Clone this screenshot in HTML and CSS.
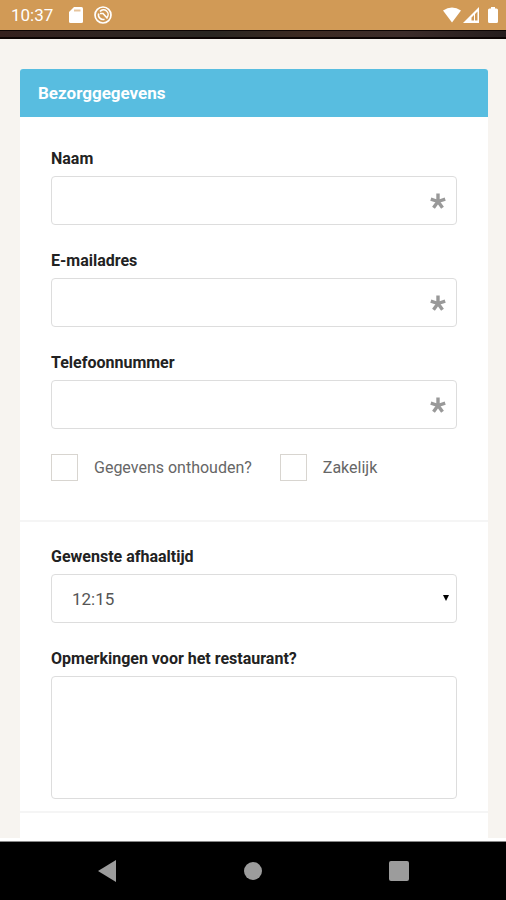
FILE: index.html
```html
<!DOCTYPE html>
<html lang="nl">
<head>
<meta charset="utf-8">
<meta name="viewport" content="width=device-width, initial-scale=1">
<title>Bezorggegevens</title>
<link rel="stylesheet" href="styles.css">
</head>
<body>
<svg width="0" height="0" class="defs" aria-hidden="true">
  <symbol id="required" viewBox="0 0 16 16">
    <path d="M8 8.500V.5M8 8.500L.8 6.200M8 8.500l7.200-2.300M8 8.500l-4.500 6.300M8 8.500l4.500 6.300" fill="none" stroke="#999" stroke-width="3.400"/>
  </symbol>
</svg>
<header class="status">
  <span class="clock">10:37</span>
  <svg class="card-icon" width="14" height="16" viewBox="0 0 14 16" aria-hidden="true"><path fill="#fff" d="M5 0h7.500Q14 0 14 1.500v13q0 1.500-1.500 1.500h-11Q0 16 0 14.500V5z"/><path d="M5 3.500h6.500" stroke="#e6c49c" stroke-width="2"/></svg>
  <svg class="sync-icon" width="18" height="18" viewBox="0 0 18 18" fill="none" stroke="#fff" aria-hidden="true"><circle cx="9" cy="9" r="8" stroke-width="1.700"/><path stroke-width="1.600" d="M6 5.500A4.600 4.600 0 0 1 13 11.500M10.500 13.300A4.600 4.600 0 0 1 4.700 7.500M6 7.500h3l4.500 5"/></svg>
  <span class="signals">
    <svg width="18" height="16" viewBox="0 0 18 16" aria-hidden="true"><path fill="#fff" d="M0 3.500Q9-2.500 18 3.500L9 15.500z"/></svg>
    <svg width="17" height="16" viewBox="0 0 17 16" aria-hidden="true"><path fill="#fff" fill-rule="evenodd" d="M0 16L16 0v16zM8.500 13.500h2.500V8L8.500 10.500zM12 13.500h2.500V4.500L12 7z"/></svg>
    <svg class="battery" width="10" height="16" viewBox="0 0 10 16" aria-hidden="true"><path fill="#fff" d="M3 0h4v1.500h1.500Q10 1.500 10 3v11.500q0 1.500-1.500 1.500h-7Q0 16 0 14.500V3q0-1.500 1.500-1.500H3z"/></svg>
  </span>
</header>
<div class="banner"></div>
<main class="page">
  <form class="card">
    <h1 class="card-title">Bezorggegevens</h1>
    <section class="group">
      <div class="field">
        <label for="name">Naam</label>
        <div class="control"><input id="name" type="text" required><svg class="star" aria-hidden="true"><use href="#required"/></svg></div>
      </div>
      <div class="field">
        <label for="mail">E-mailadres</label>
        <div class="control"><input id="mail" type="email" required><svg class="star" aria-hidden="true"><use href="#required"/></svg></div>
      </div>
      <div class="field">
        <label for="phone">Telefoonnummer</label>
        <div class="control"><input id="phone" type="tel" required><svg class="star" aria-hidden="true"><use href="#required"/></svg></div>
      </div>
      <div class="checks">
        <label class="check" for="remember"><input id="remember" type="checkbox">Gegevens onthouden?</label>
        <label class="check" for="business"><input id="business" type="checkbox">Zakelijk</label>
      </div>
    </section>
    <section class="group order">
      <div class="field">
        <label for="time">Gewenste afhaaltijd</label>
        <div class="control">
          <select id="time"><option>12:15</option></select>
          <svg class="arrow" viewBox="0 0 6 6" aria-hidden="true"><path d="M0 0h6L3 6z"/></svg>
        </div>
      </div>
      <div class="field">
        <label for="notes">Opmerkingen voor het restaurant?</label>
        <textarea id="notes"></textarea>
      </div>
    </section>
    <section class="group"></section>
  </form>
</main>
<nav class="system-nav">
  <button type="button" aria-label="Terug"><svg width="18" height="22" viewBox="0 0 18 22"><path d="M18 0v22L0 11z"/></svg></button>
  <button type="button" aria-label="Start"><svg width="20" height="20" viewBox="0 0 20 20"><circle cx="10" cy="10" r="9"/></svg></button>
  <button type="button" aria-label="Overzicht"><svg width="20" height="20" viewBox="0 0 20 20"><rect width="20" height="20" rx="2"/></svg></button>
</nav>
</body>
</html>
```
FILE: styles.css
```css
* {
  box-sizing: border-box;
}

body {
  display: flex;
  flex-direction: column;
  height: 100vh;
  margin: 0;
  overflow: hidden;
  background: #fff;
  color: #222;
  font-family: Roboto, "Liberation Sans", sans-serif;
  font-size: 16px;
  line-height: 20px;
}

.defs {
  position: absolute;
}

.status {
  display: flex;
  flex: none;
  align-items: center;
  height: 30px;
  padding: 0 8px 0 11px;
  background: #d19a56;
  color: #fff;
  font-size: 17px;
}

.card-icon {
  margin-left: 16px;
}

.sync-icon {
  margin-left: 11px;
}

.signals {
  display: flex;
  gap: 2px;
  margin-left: auto;
}

.battery {
  margin-left: 6px;
}

.banner {
  flex: none;
  height: 9px;
  border: solid #0d0504;
  border-width: 1px 0 2px;
  background: linear-gradient(90deg, #35211e, #302522 20%, #292622 42%, #3d2a22 60%, #3c2c2a 80%, #251d1d);
}

.page {
  flex: 1;
  min-height: 0;
  padding: 30px 18px 0 20px;
  overflow: hidden;
  border-bottom: 3px solid #fff;
  background: #f7f4f0;
}

.card {
  display: flex;
  flex-direction: column;
  min-height: 100%;
  border-radius: 3px;
  background: #fff;
}

.card-title {
  margin: 0;
  padding: 14px 18px;
  border-radius: 3px 3px 0 0;
  background: #58bde0;
  color: #fff;
  font-size: 17px;
  font-weight: 700;
  line-height: 20px;
}

.group {
  padding: 32px 31px 39px;
}

.group + .group {
  border-top: 2px solid #f5f5f5;
}

.order {
  padding-top: 25px;
  padding-bottom: 12px;
}

.field + .field {
  margin-top: 26px;
}

.checks {
  margin-top: 25px;
}

.field > label {
  display: block;
  margin-bottom: 7px;
  font-weight: 700;
}

.control {
  position: relative;
}

.control input,
.control select,
textarea {
  display: block;
  width: 100%;
  height: 49px;
  margin: 0;
  padding: 0 20px;
  border: 1px solid #ddd;
  border-radius: 4px;
  outline: 0;
  background: #fff;
  color: #555;
  font: inherit;
  font-size: 17px;
}

.control select {
  appearance: none;
}

textarea {
  height: 123px;
  resize: none;
}

.star {
  position: absolute;
  top: 17px;
  right: 11px;
  width: 16px;
  height: 16px;
}

.arrow {
  position: absolute;
  top: 21px;
  right: 8px;
  width: 6px;
  height: 6px;
  pointer-events: none;
}

.checks {
  display: flex;
  gap: 28px;
}

.check {
  display: flex;
  align-items: center;
  gap: 16px;
  color: #666;
}

.check input {
  flex: none;
  width: 27px;
  height: 27px;
  margin: 0;
  border: 1px solid #d8d5d0;
  background: #fff;
  appearance: none;
}

.system-nav {
  display: flex;
  flex: none;
  align-items: center;
  justify-content: center;
  gap: 98px;
  height: 59px;
  border-top: 1px solid #888;
  background: #000;
}

.system-nav button {
  display: grid;
  place-items: center;
  width: 48px;
  height: 48px;
  padding: 0;
  border: 0;
  background: none;
}

.system-nav svg {
  fill: #9c9c9c;
}
```
